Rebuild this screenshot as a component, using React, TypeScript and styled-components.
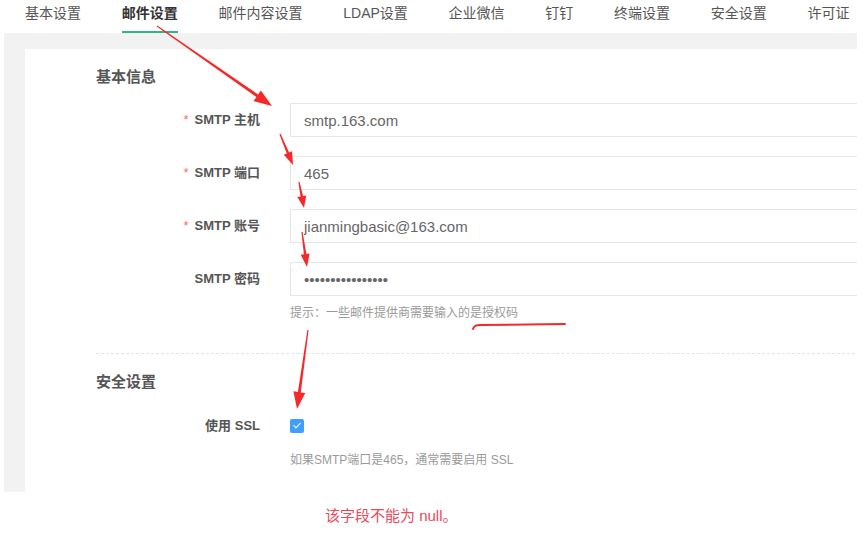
import styled, { createGlobalStyle } from 'styled-components';

const GlobalStyle = createGlobalStyle`
  body {
    margin: 0;
    background: #fff;
    font-family: "Liberation Sans", "Noto Sans CJK SC", sans-serif;
  }
`;

const tabs = ['基本设置', '邮件设置', '邮件内容设置', 'LDAP设置', '企业微信', '钉钉', '终端设置', '安全设置', '许可证'];

const basicFields = [
  { label: 'SMTP 主机', value: 'smtp.163.com', required: true, type: 'text' },
  { label: 'SMTP 端口', value: '465', required: true, type: 'text' },
  { label: 'SMTP 账号', value: 'jianmingbasic@163.com', required: true, type: 'text' },
  { label: 'SMTP 密码', value: 'jianmingbasic163', required: false, type: 'password' },
];

// red hand-drawn arrows on top of the screenshot
const arrows = [
  { x1: 157, y1: 26, x2: 272, y2: 106, shaft: 3, head: 18, headW: 13 },
  { x1: 280, y1: 134, x2: 293, y2: 165, shaft: 2.5, head: 13, headW: 9 },
  { x1: 299, y1: 182, x2: 304, y2: 208, shaft: 2.5, head: 12, headW: 9 },
  { x1: 302, y1: 232, x2: 307, y2: 267, shaft: 2.5, head: 13, headW: 9 },
  { x1: 308, y1: 330, x2: 297, y2: 409, shaft: 3, head: 17, headW: 12 },
];

const arrowPoints = (a: (typeof arrows)[number]) => {
  const dx = a.x2 - a.x1;
  const dy = a.y2 - a.y1;
  const len = Math.hypot(dx, dy);
  const ux = dx / len;
  const uy = dy / len;
  const nx = -uy;
  const ny = ux;
  const bx = a.x2 - ux * a.head;
  const by = a.y2 - uy * a.head;
  const pts = [
    [a.x1 + nx * 0.6, a.y1 + ny * 0.6],
    [bx + (nx * a.shaft) / 2, by + (ny * a.shaft) / 2],
    [bx + (nx * a.headW) / 2, by + (ny * a.headW) / 2],
    [a.x2, a.y2],
    [bx - (nx * a.headW) / 2, by - (ny * a.headW) / 2],
    [bx - (nx * a.shaft) / 2, by - (ny * a.shaft) / 2],
    [a.x1 - nx * 0.6, a.y1 - ny * 0.6],
  ];
  return pts.map((p) => p.map((v) => v.toFixed(1)).join(',')).join(' ');
};

const App = () => {
  return (
    <Page>
      <GlobalStyle />
      <TabBar>
        {tabs.map((t) => (
          <Tab key={t} $active={t === '邮件设置'}>
            {t}
          </Tab>
        ))}
      </TabBar>
      <Main>
        <Card>
          <SectionTitle>基本信息</SectionTitle>
          <Form>
            {basicFields.map((f) => (
              <Row key={f.label}>
                <Label>
                  {f.required && <Required>*</Required>}
                  {f.label}
                </Label>
                <Field type={f.type} defaultValue={f.value} readOnly />
              </Row>
            ))}
          </Form>
          <Hint>提示：一些邮件提供商需要输入的是授权码</Hint>
          <Divider />
          <SectionTitle $top={17}>安全设置</SectionTitle>
          <CheckRow>
            <Label>使用 SSL</Label>
            <CheckBox />
          </CheckRow>
          <Hint $top={18}>如果SMTP端口是465，通常需要启用 SSL</Hint>
        </Card>
      </Main>
      <Footer>
        <ErrorText>该字段不能为 null。</ErrorText>
      </Footer>
      <Marks viewBox="0 0 865 538">
        {arrows.map((a, i) => (
          <polygon key={i} points={arrowPoints(a)} fill="#f42a2a" />
        ))}
        <path
          d="M473 329 Q474 325 480 325 L565 324"
          stroke="#f42a2a"
          strokeWidth="2"
          fill="none"
          strokeLinecap="round"
        />
      </Marks>
    </Page>
  );
};

const Page = styled.div`
  position: relative;
  width: 865px;
  height: 538px;
  overflow: hidden;
  background: #fff;
`;

const TabBar = styled.div`
  display: flex;
  gap: 40.75px;
  height: 33px;
  padding-left: 25px;
  box-sizing: border-box;
`;

const Tab = styled.div<{ $active?: boolean }>`
  height: 33px;
  box-sizing: border-box;
  padding-top: 3px;
  line-height: 20px;
  font-size: 14px;
  white-space: nowrap;
  color: ${(p) => (p.$active ? '#333' : '#555')};
  font-weight: ${(p) => (p.$active ? 700 : 400)};
  border-bottom: 2px solid ${(p) => (p.$active ? '#2db58c' : 'transparent')};
`;

const Main = styled.div`
  margin-left: 4px;
  width: 853px;
  height: 459px;
  background: #f2f2f2;
  padding: 16px 0 0 21px;
  box-sizing: border-box;
  overflow: hidden;
`;

const Card = styled.div`
  background: #fff;
  height: 600px;
  width: 900px;
  padding: 17px 0 0 71px;
  box-sizing: border-box;
`;

const SectionTitle = styled.h3<{ $top?: number }>`
  margin: ${(p) => p.$top ?? 0}px 0 0;
  font-size: 15px;
  line-height: 22px;
  font-weight: 700;
  color: #555;
`;

const Form = styled.div`
  display: flex;
  flex-direction: column;
  gap: 19px;
  margin-top: 15px;
`;

const Row = styled.div`
  display: grid;
  grid-template-columns: 164px 640px;
  column-gap: 30px;
  align-items: center;
`;

const CheckRow = styled(Row)`
  margin-top: 26px;
  height: 14px;
`;

const Label = styled.label`
  text-align: right;
  font-size: 13px;
  line-height: 14px;
  font-weight: 700;
  color: #555;
  white-space: nowrap;
`;

const Required = styled.span`
  color: #f56c6c;
  margin-right: 6px;
  font-weight: 400;
`;

const Field = styled.input`
  height: 34px;
  box-sizing: border-box;
  border: 1px solid #e6e6e6;
  border-radius: 0;
  padding: 0 13px;
  font-family: "Liberation Sans", "Noto Sans CJK SC", sans-serif;
  font-size: 15px;
  color: #666;
  background: #fff;
  outline: none;
`;

const Hint = styled.div<{ $top?: number }>`
  margin-top: ${(p) => p.$top ?? 8}px;
  padding-left: 194px;
  font-size: 12px;
  line-height: 18px;
  color: #9a9a9a;
`;

const Divider = styled.div`
  margin-top: 31px;
  border-top: 1px dashed #e3e3e3;
`;

const CheckBox = styled.span`
  position: relative;
  display: block;
  width: 14px;
  height: 14px;
  border-radius: 2px;
  background: #409eff;
  &::after {
    content: '';
    position: absolute;
    left: 4.5px;
    top: 2px;
    width: 3px;
    height: 6px;
    border: solid #fff;
    border-width: 0 1px 1px 0;
    transform: rotate(45deg);
  }
`;

const Footer = styled.div`
  padding: 15px 0 0 325px;
`;

const ErrorText = styled.div`
  font-size: 15px;
  line-height: 18px;
  color: #e84a5c;
  white-space: nowrap;
`;

const Marks = styled.svg`
  position: absolute;
  left: 0;
  top: 0;
  width: 865px;
  height: 538px;
  pointer-events: none;
`;

export default App;
